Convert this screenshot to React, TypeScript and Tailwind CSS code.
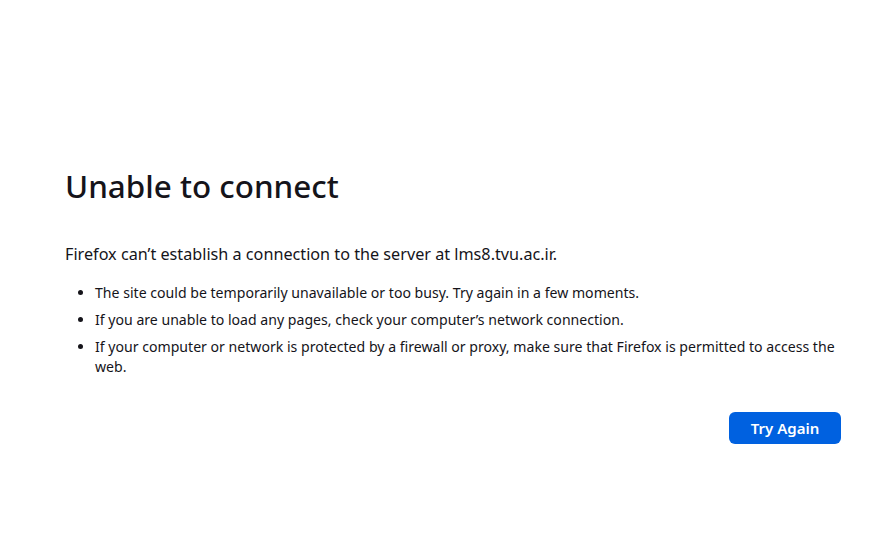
const items = [
  "The site could be temporarily unavailable or too busy. Try again in a few moments.",
  "If you are unable to load any pages, check your computer’s network connection.",
  "If your computer or network is protected by a firewall or proxy, make sure that Firefox is permitted to access the web.",
];

export default function App() {
  return (
    <div className="min-h-screen w-full bg-white text-[#15141a] font-['Noto_Sans',sans-serif]">
      <div className="ml-[65px] w-[776px] pt-[164px]">
        <h1 className="text-[31.4px] font-medium leading-[44px]">Unable to connect</h1>
        <p className="mt-[34px] text-[16.2px] leading-[24px]">
          Firefox can’t establish a connection to the server at lms8.tvu.ac.ir.
        </p>
        <ul className="mt-[17px] list-disc pl-[30px] text-[14.1px] leading-[20px]">
          {items.map((t) => (
            <li key={t} className="mb-[7px]">
              {t}
            </li>
          ))}
        </ul>
        <div className="mt-[35px] flex justify-end">
          <button className="h-[32px] w-[112px] rounded-[6px] bg-[#0061e0] text-[15px] font-semibold text-white">
            Try Again
          </button>
        </div>
      </div>
    </div>
  );
}
